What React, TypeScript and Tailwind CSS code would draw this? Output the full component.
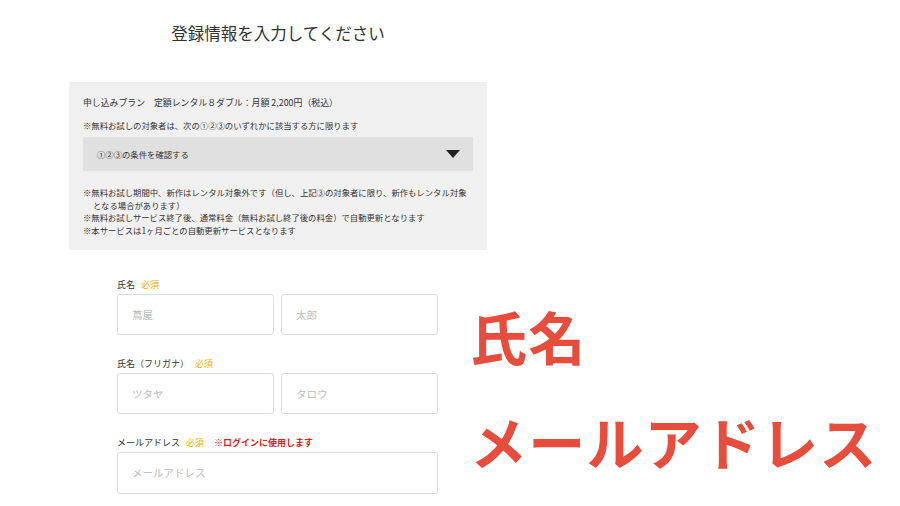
import React from 'react';

const FONT = { fontFamily: '"Noto Sans CJK JP", "Noto Sans", sans-serif' };

const Required: React.FC = () => <span className="ml-[6px] text-[#f5b000]">必須</span>;

interface FieldProps {
  label: string;
  note?: string;
  children: React.ReactNode;
}

const Field: React.FC<FieldProps> = ({ label, note, children }) => (
  <div className="flex flex-col">
    <div className="h-[12px] text-[9px] leading-[12px] text-[#333] mb-[3px] flex items-center">
      <span>{label}</span>
      <Required />
      {note && <span className="ml-[10px] text-[#d6261b] font-bold">{note}</span>}
    </div>
    {children}
  </div>
);

const TextBox: React.FC<{ placeholder: string; className?: string }> = ({ placeholder, className }) => (
  <input
    type="text"
    placeholder={placeholder}
    style={FONT}
    className={`h-[41px] border-[1.5px] border-[#dcdcdc] rounded-[3px] bg-white pl-[14px] text-[10.5px] text-[#333] placeholder:text-[#bdbdbd] outline-none ${className ?? ''}`}
  />
);

const App: React.FC = () => {
  const notes = [
    '※無料お試し期間中、新作はレンタル対象外です（但し、上記③の対象者に限り、新作もレンタル対象となる場合があります）',
    '※無料お試しサービス終了後、通常料金（無料お試し終了後の料金）で自動更新となります',
    '※本サービスは1ヶ月ごとの自動更新サービスとなります',
  ];

  return (
    <div className="w-[900px] h-[506px] bg-white overflow-hidden" style={FONT}>
      {/* top block */}
      <div className="ml-[69px] w-[418px]">
        <h1 className="pt-[22px] h-[82px] text-center text-[16.5px] leading-[22px] text-[#333] font-normal">
          登録情報を入力してください
        </h1>

        <div className="bg-[#f0f0f0] px-[14px] pt-[15px] pb-[13px] text-[#333]">
          <p className="text-[8.9px] leading-[12px]">申し込みプラン　定額レンタル８ダブル：月額 2,200円（税込）</p>
          <p className="mt-[10px] text-[8.35px] leading-[12px]">
            ※無料お試しの対象者は、次の①②③のいずれかに該当する方に限ります
          </p>
          <div className="mt-[6px] h-[34px] bg-[#e0e0e0] flex items-center justify-between pl-[14px] pr-[13px]">
            <span className="text-[8.35px]">①②③の条件を確認する</span>
            <svg width="14" height="8" viewBox="0 0 14 8">
              <path d="M0 0 H14 L7 8 Z" fill="#222" />
            </svg>
          </div>
          <ul className="mt-[15px] text-[8.35px] leading-[12.7px]">
            {notes.map((n) => (
              <li key={n} className="pl-[1.2em] -indent-[1.2em]">
                {n}
              </li>
            ))}
          </ul>
        </div>
      </div>

      {/* form + annotation */}
      <div className="flex mt-[29px]">
        <div className="ml-[117px] w-[321px] flex flex-col gap-[23px]">
          <Field label="氏名">
            <div className="flex gap-[7px]">
              <TextBox placeholder="蔦屋" className="w-[157px]" />
              <TextBox placeholder="太郎" className="w-[157px]" />
            </div>
          </Field>
          <Field label="氏名（フリガナ）">
            <div className="flex gap-[7px]">
              <TextBox placeholder="ツタヤ" className="w-[157px]" />
              <TextBox placeholder="タロウ" className="w-[157px]" />
            </div>
          </Field>
          <Field label="メールアドレス" note="※ログインに使用します">
            <TextBox placeholder="メールアドレス" className="w-[321px] h-[42px]" />
          </Field>
        </div>

        <div className="ml-[32px] pt-[28px] flex flex-col gap-[48px] text-[#e74c3c] font-bold text-[57px] leading-[57px] tracking-[1.2px] whitespace-nowrap">
          <span>氏名</span>
          <span>メールアドレス</span>
        </div>
      </div>
    </div>
  );
};

export default App;
